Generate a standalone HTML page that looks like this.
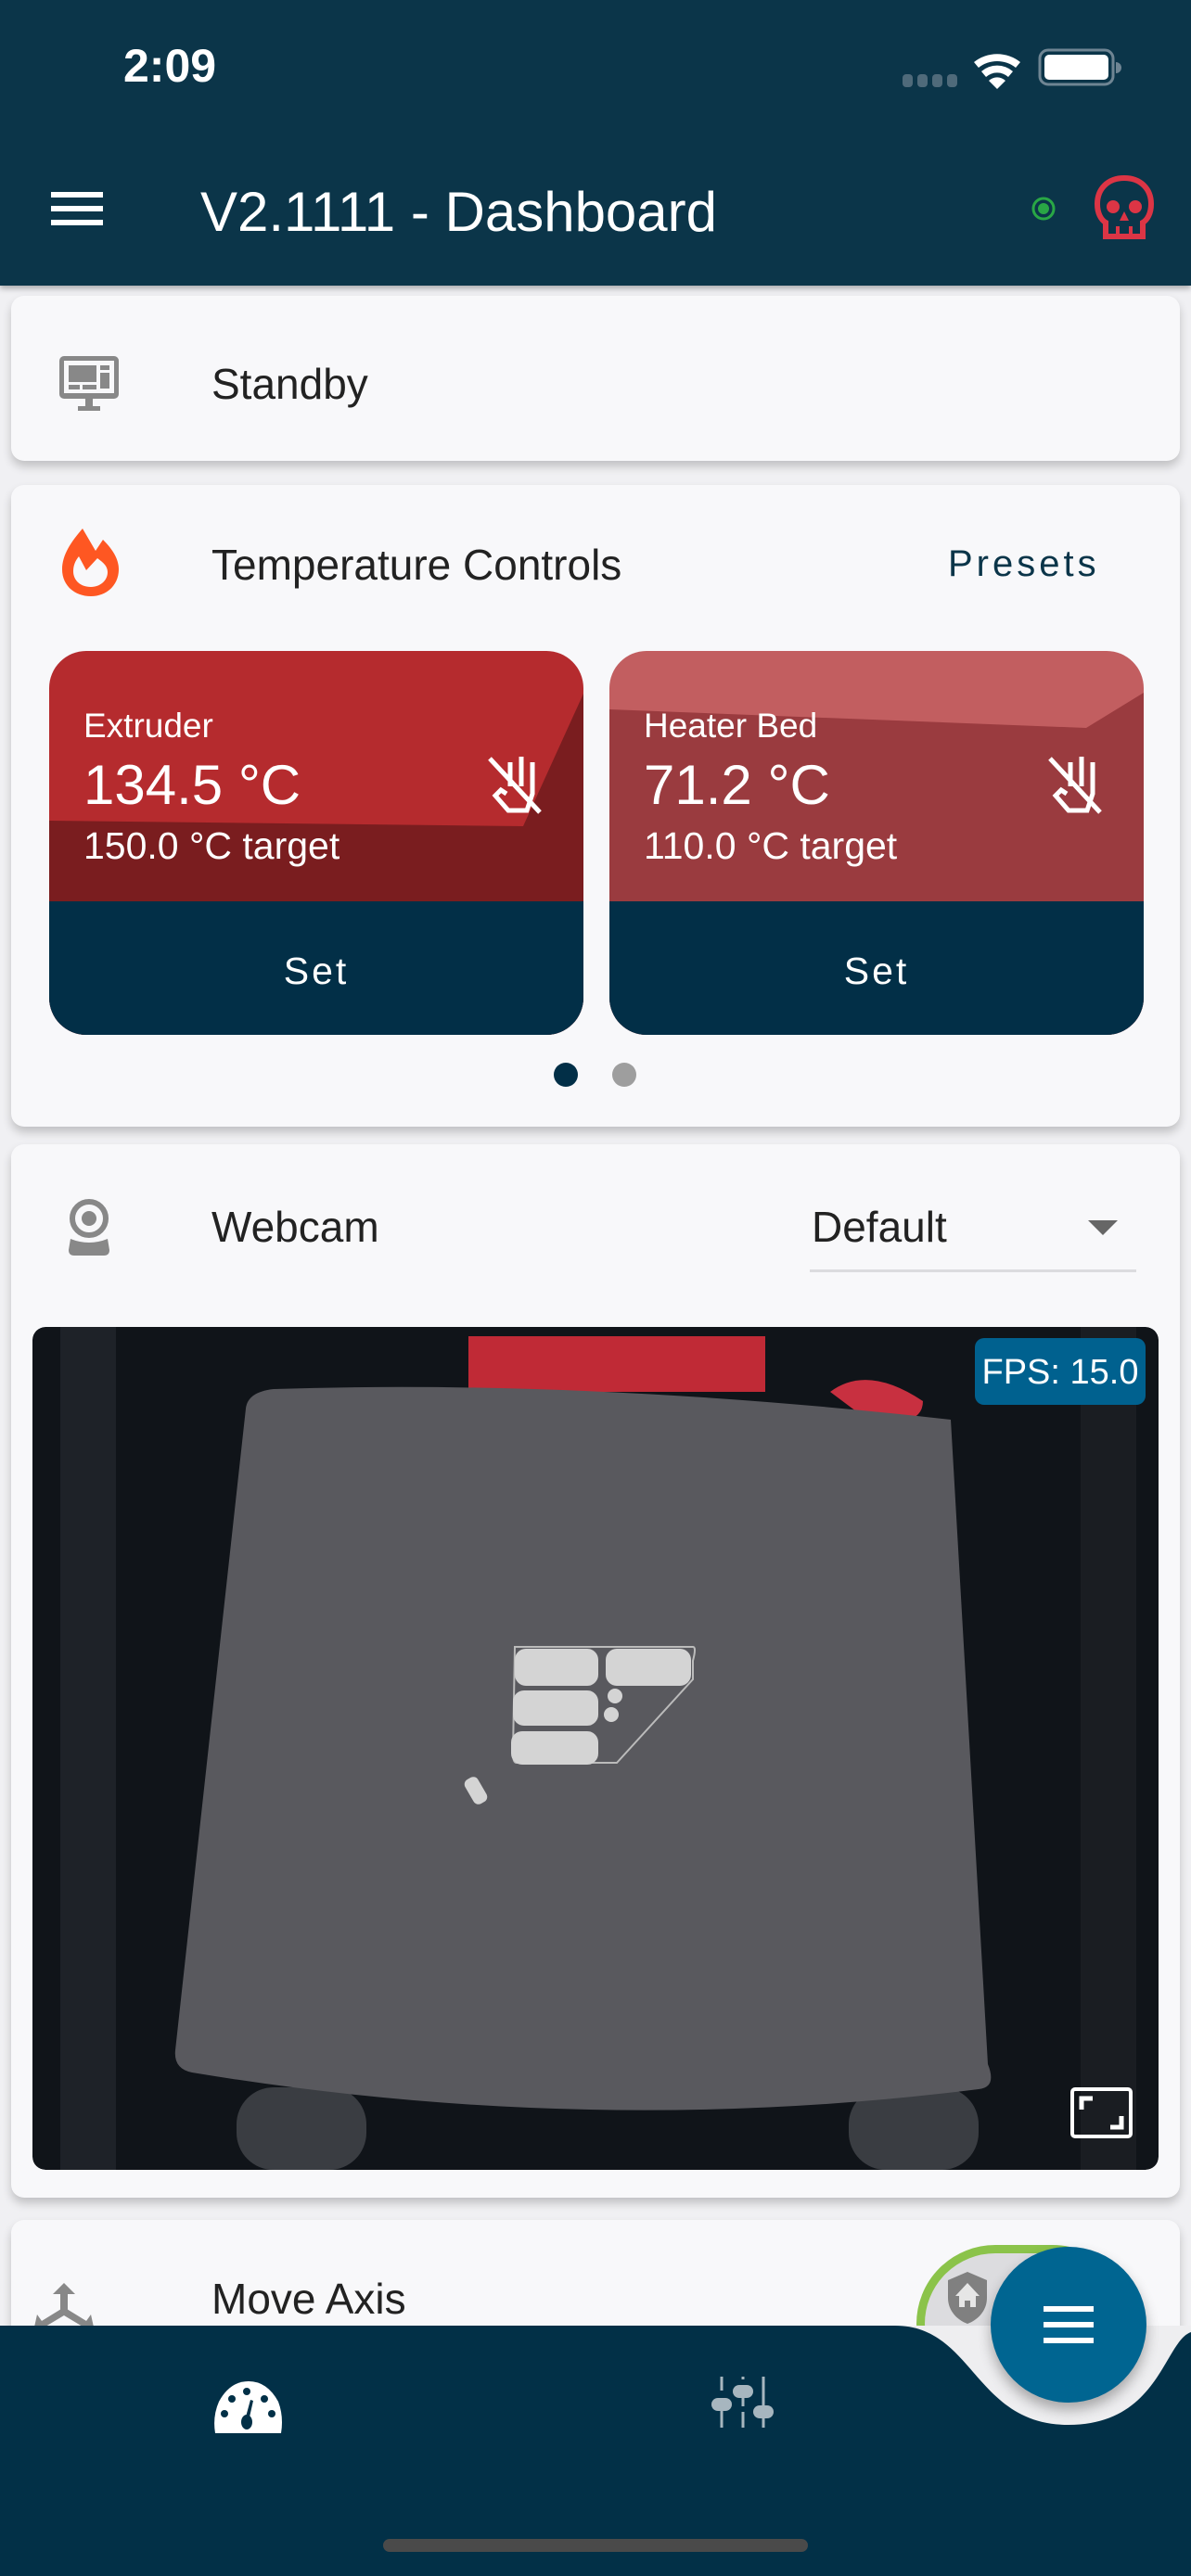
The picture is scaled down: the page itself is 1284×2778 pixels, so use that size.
<!DOCTYPE html>
<html><head><meta charset="utf-8"><style>
*{margin:0;padding:0;box-sizing:border-box}
body{width:1284px;height:2778px;overflow:hidden;background:#f0f0f3;font-family:"Liberation Sans",sans-serif;position:relative}
.abs{position:absolute}
.card{position:absolute;left:12px;width:1260px;background:#f8f8fa;border-radius:14px;box-shadow:0 6px 10px rgba(0,0,0,.2)}
.t{position:absolute;white-space:nowrap;color:#222}
</style></head><body>
<div class="abs" style="left:0;top:0;width:1284px;height:308px;background:#0b3549;box-shadow:0 3px 6px rgba(0,0,0,.3);z-index:2">
<div class="t" style="left:133px;top:42px;font-size:50px;font-weight:bold;color:#fff">2:09</div>
<svg class="abs" style="left:970px;top:50px" width="240" height="50">
<g fill="#4f6a7a"><rect x="3" y="30" width="11" height="14" rx="4"/><rect x="19" y="30" width="11" height="14" rx="4"/><rect x="35" y="30" width="11" height="14" rx="4"/><rect x="51" y="30" width="11" height="14" rx="4"/></g>
<path d="M80,17 A40,40 0 0 1 130,17 L125,23 A32,32 0 0 0 85,23Z M88,27 A26,26 0 0 1 122,27 L117,33 A18,18 0 0 0 93,33Z M96,37 A13,13 0 0 1 114,37 L105,46Z" fill="#fff"/>
<rect x="151" y="4" width="79" height="37" rx="9" fill="none" stroke="#6f8593" stroke-width="3"/>
<rect x="156" y="9" width="69" height="27" rx="5" fill="#fff"/>
<path d="M233,17 a6,6 0 0 1 0,12z" fill="#6f8593"/>
</svg>
<svg class="abs" style="left:55px;top:205px" width="60" height="40"><g fill="#fff"><rect y="2" width="56" height="6"/><rect y="17" width="56" height="6"/><rect y="32" width="56" height="6"/></g></svg>
<div class="t" style="left:216px;top:194px;font-size:60px;color:#fff">V2.1111 - Dashboard</div>
<svg class="abs" style="left:1110px;top:210px" width="30" height="30"><circle cx="15" cy="15" r="11" fill="none" stroke="#29a745" stroke-width="3"/><circle cx="15" cy="15" r="6" fill="#29a745"/></svg>
<svg class="abs" style="left:1178px;top:188px" width="68" height="72"><path d="M34,4 C16,4 5,16 5,32 C5,42 9,49 14,52 L14,67 L54,67 L54,52 C59,49 63,42 63,32 C63,16 52,4 34,4Z" fill="none" stroke="#dc3545" stroke-width="6"/><circle cx="22" cy="35" r="7" fill="#dc3545"/><circle cx="46" cy="35" r="7" fill="#dc3545"/><path d="M34,40 L29,50 L39,50Z" fill="#dc3545"/><path d="M27,56 V67 M41,56 V67" stroke="#dc3545" stroke-width="4"/></svg>
</div>

<div class="card" style="top:319px;height:178px">
<svg class="abs" style="left:51px;top:65px" width="66" height="60"><rect x="1" y="0" width="64" height="46" rx="5" fill="#888"/><rect x="6" y="5" width="54" height="35" fill="#f8f8fa"/><rect x="11" y="10" width="30" height="18" fill="#888"/><rect x="45" y="10" width="10" height="5" fill="#888"/><rect x="45" y="18" width="10" height="17" fill="#888"/><rect x="11" y="31" width="12" height="5" fill="#888"/><rect x="26" y="31" width="15" height="5" fill="#888"/><rect x="29" y="46" width="8" height="8" fill="#888"/><rect x="21" y="54" width="24" height="5" fill="#888"/></svg>
<div class="t" style="left:216px;top:68px;font-size:46px">Standby</div>
</div>

<div class="card" style="top:523px;height:692px">
<svg class="abs" style="left:53px;top:47px" width="66" height="74"><path d="M24,0 L38,24 L46,12 C58,24 63,34 63,44 C63,61 50,73 33,73 C15,73 2,61 2,44 C2,28 12,14 24,0Z" fill="#fe5722"/><path d="M33,63 C22,63 14,56 14,46 C14,40 16,35 20,30 L28,45 L40,32 C47,37 51,41 51,47 C51,56 43,63 33,63Z" fill="#f8f8fa"/></svg>
<div class="t" style="left:216px;top:59px;font-size:46px">Temperature Controls</div>
<div class="t" style="left:1010px;top:63px;font-size:40px;letter-spacing:4px;color:#0b3549">Presets</div>
</div>

<svg class="abs" style="left:53px;top:702px" width="576" height="414">
<defs><clipPath id="c1"><rect width="576" height="414" rx="40"/></clipPath></defs>
<g clip-path="url(#c1)"><rect width="576" height="414" fill="#b52b2e"/><path d="M0,183 L511,189 L576,46 L576,414 L0,414Z" fill="#7a1d1f"/><rect y="270" width="576" height="144" fill="#022f47"/></g>
</svg>
<svg class="abs" style="left:657px;top:702px" width="576" height="414">
<defs><clipPath id="c2"><rect width="576" height="414" rx="40"/></clipPath></defs>
<g clip-path="url(#c2)"><rect width="576" height="414" fill="#c25e60"/><path d="M0,63 L514,83 L576,45 L576,414 L0,414Z" fill="#9a3b3f"/><rect y="270" width="576" height="144" fill="#022f47"/></g>
</svg>
<div class="t" style="left:90px;top:762px;font-size:37px;color:#fff">Extruder</div>
<div class="t" style="left:90px;top:812px;font-size:60px;color:#fff">134.5 °C</div>
<div class="t" style="left:90px;top:889px;font-size:41px;color:#fff">150.0 °C target</div>
<div class="t" style="left:53px;width:576px;text-align:center;top:1024px;font-size:41px;color:#fff;letter-spacing:3px">Set</div>
<div class="t" style="left:694px;top:762px;font-size:37px;color:#fff">Heater Bed</div>
<div class="t" style="left:694px;top:812px;font-size:60px;color:#fff">71.2 °C</div>
<div class="t" style="left:694px;top:889px;font-size:41px;color:#fff">110.0 °C target</div>
<div class="t" style="left:657px;width:576px;text-align:center;top:1024px;font-size:41px;color:#fff;letter-spacing:3px">Set</div>
<svg class="abs" style="left:524px;top:812px" width="64" height="68"><g fill="none" stroke="#fff" stroke-width="5"><path d="M4,6 L58,64"/><path d="M26,10 V36 M38,4 V36 M50,10 V44 L44,62 H24 L10,46 L16,40 L22,44"/></g></svg>
<svg class="abs" style="left:1128px;top:812px" width="64" height="68"><g fill="none" stroke="#fff" stroke-width="5"><path d="M4,6 L58,64"/><path d="M26,10 V36 M38,4 V36 M50,10 V44 L44,62 H24 L10,46 L16,40 L22,44"/></g></svg>
<svg class="abs" style="left:590px;top:1144px" width="100" height="30"><circle cx="20" cy="15" r="13" fill="#022f47"/><circle cx="83" cy="15" r="13" fill="#9e9e9e"/></svg>

<div class="card" style="top:1234px;height:1136px">
<svg class="abs" style="left:58px;top:58px" width="52" height="64"><circle cx="26" cy="22" r="18" fill="none" stroke="#888" stroke-width="6"/><circle cx="26" cy="22" r="8" fill="#888"/><path d="M6,44 Q26,52 46,44 L48,56 Q48,62 42,62 H10 Q4,62 4,56Z" fill="#888"/></svg>
<div class="t" style="left:216px;top:62px;font-size:46px">Webcam</div>
<div class="t" style="left:863px;top:62px;font-size:46px">Default</div>
<svg class="abs" style="left:1161px;top:82px" width="32" height="20"><path d="M0,0 H32 L16,16Z" fill="#666"/></svg>
<div class="abs" style="left:861px;top:135px;width:352px;height:3px;background:#dcdcdf"></div>
</div>

<svg class="abs" style="left:35px;top:1431px;border-radius:14px" width="1214" height="909">
<rect width="1214" height="909" rx="14" fill="#101419"/>
<rect x="30" y="0" width="60" height="909" fill="#1e2228"/>
<rect x="1130" y="0" width="60" height="909" fill="#1a1d22"/>
<rect x="470" y="10" width="320" height="60" fill="#c02a36"/>
<path d="M860,70 Q900,40 960,80 Q960,110 900,100Z" fill="#c83040"/>
<rect x="220" y="820" width="140" height="89" rx="40" fill="#3a3d42"/>
<rect x="880" y="820" width="140" height="89" rx="40" fill="#3a3d42"/>
<path d="M260,67 Q600,56 990,100 L1030,795 Q1040,820 1020,822 Q600,875 172,804 Q152,800 154,780 L230,88 Q232,70 260,67Z" fill="#59595e"/>
<path d="M520,345 L712,345 Q716,345 712,360 L712,380 L630,470 L522,470 Q518,470 518,460Z" fill="none" stroke="#bbb" stroke-width="2"/>
<g fill="#d4d4d4"><rect x="520" y="347" width="90" height="40" rx="12"/><rect x="618" y="347" width="92" height="40" rx="12"/><rect x="518" y="392" width="92" height="38" rx="12"/><rect x="516" y="436" width="94" height="36" rx="12"/><circle cx="628" cy="398" r="8"/><circle cx="624" cy="418" r="8"/><rect x="470" y="485" width="16" height="30" rx="6" transform="rotate(-30 478 500)"/></g>
<rect x="1016" y="12" width="184" height="72" rx="10" fill="#00618f"/>
<text x="1108" y="61" text-anchor="middle" font-family="Liberation Sans" font-size="38" fill="#fff">FPS: 15.0</text>
<rect x="1121" y="822" width="63" height="51" rx="3" fill="none" stroke="#fff" stroke-width="4"/>
<path d="M1131,844 V832 H1143 M1174,851 V863 H1162" fill="none" stroke="#fff" stroke-width="5"/>
</svg>

<div class="card" style="top:2394px;height:200px">
<svg class="abs" style="left:24px;top:68px" width="66" height="50"><g fill="#888"><path d="M33,0 L45,12 H37 V30 H29 V12 H21Z"/><path d="M30,28 L4,44 L8,50 L33,35 L58,50 L62,44 L36,28Z"/><path d="M0,52 L4,34 L14,48Z M66,52 L62,34 L52,48Z"/></g></svg>
<div class="t" style="left:216px;top:58px;font-size:46px">Move Axis</div>
</div>
<div class="abs" style="left:988px;top:2421px;width:232px;height:170px;border-radius:85px;border:9px solid #8bc34a;background:#dcdcdf"></div>
<svg class="abs" style="left:1020px;top:2450px" width="46" height="56"><path d="M23,0 L44,9 V28 C44,42 34,52 23,56 C12,52 2,42 2,28 V9Z" fill="#808080"/><path d="M23,12 L36,26 H32 V38 H26 V31 H20 V38 H14 V26 H10Z" fill="#e6e6e6"/></svg>

<svg class="abs" style="left:0;top:2490px" width="1284" height="288">
<path d="M0,18 L1284,18 L1284,288 L0,288Z" fill="#eeeef0"/>
<path d="M0,18 L965,18 C1050,18 1050,125 1152,125 C1250,125 1255,35 1284,25 L1284,288 L0,288Z" fill="#023047"/>
<path d="M232,134 L303,134 Q306,116 300,100 Q288,78 268,78 Q248,78 236,100 Q229,116 232,134Z" fill="#fff"/>
<g fill="#023047"><circle cx="266" cy="89" r="4"/><circle cx="250" cy="97" r="4"/><circle cx="285" cy="97" r="4"/><circle cx="242" cy="113" r="4"/><circle cx="293" cy="113" r="4"/><ellipse cx="266" cy="122" rx="6" ry="8"/><path d="M264,120 L270,98 L273,99 L268,121Z"/></g>
<g stroke="#a7b6bf" stroke-width="3"><path d="M778,73 V128 M801,73 V128 M823,73 V128"/></g>
<g fill="#023047"><rect x="772" y="88" width="12" height="12"/><rect x="795" y="76" width="12" height="6"/><rect x="795" y="105" width="12" height="6"/><rect x="817" y="104" width="12" height="12"/></g>
<g fill="#a7b6bf"><rect x="790" y="82" width="22" height="14" rx="7"/><rect x="767" y="96" width="22" height="14" rx="7"/><rect x="812" y="104" width="22" height="14" rx="7"/></g>
<rect x="413" y="248" width="458" height="14" rx="7" fill="#4a4a4a"/>
</svg>
<div class="abs" style="left:1068px;top:2423px;width:168px;height:168px;border-radius:50%;background:#006591;box-shadow:0 8px 14px rgba(0,0,0,.3)"></div>
<svg class="abs" style="left:1125px;top:2487px" width="54" height="40"><g fill="#fff"><rect y="0" width="54" height="6"/><rect y="17" width="54" height="6"/><rect y="34" width="54" height="6"/></g></svg>
</body></html>
